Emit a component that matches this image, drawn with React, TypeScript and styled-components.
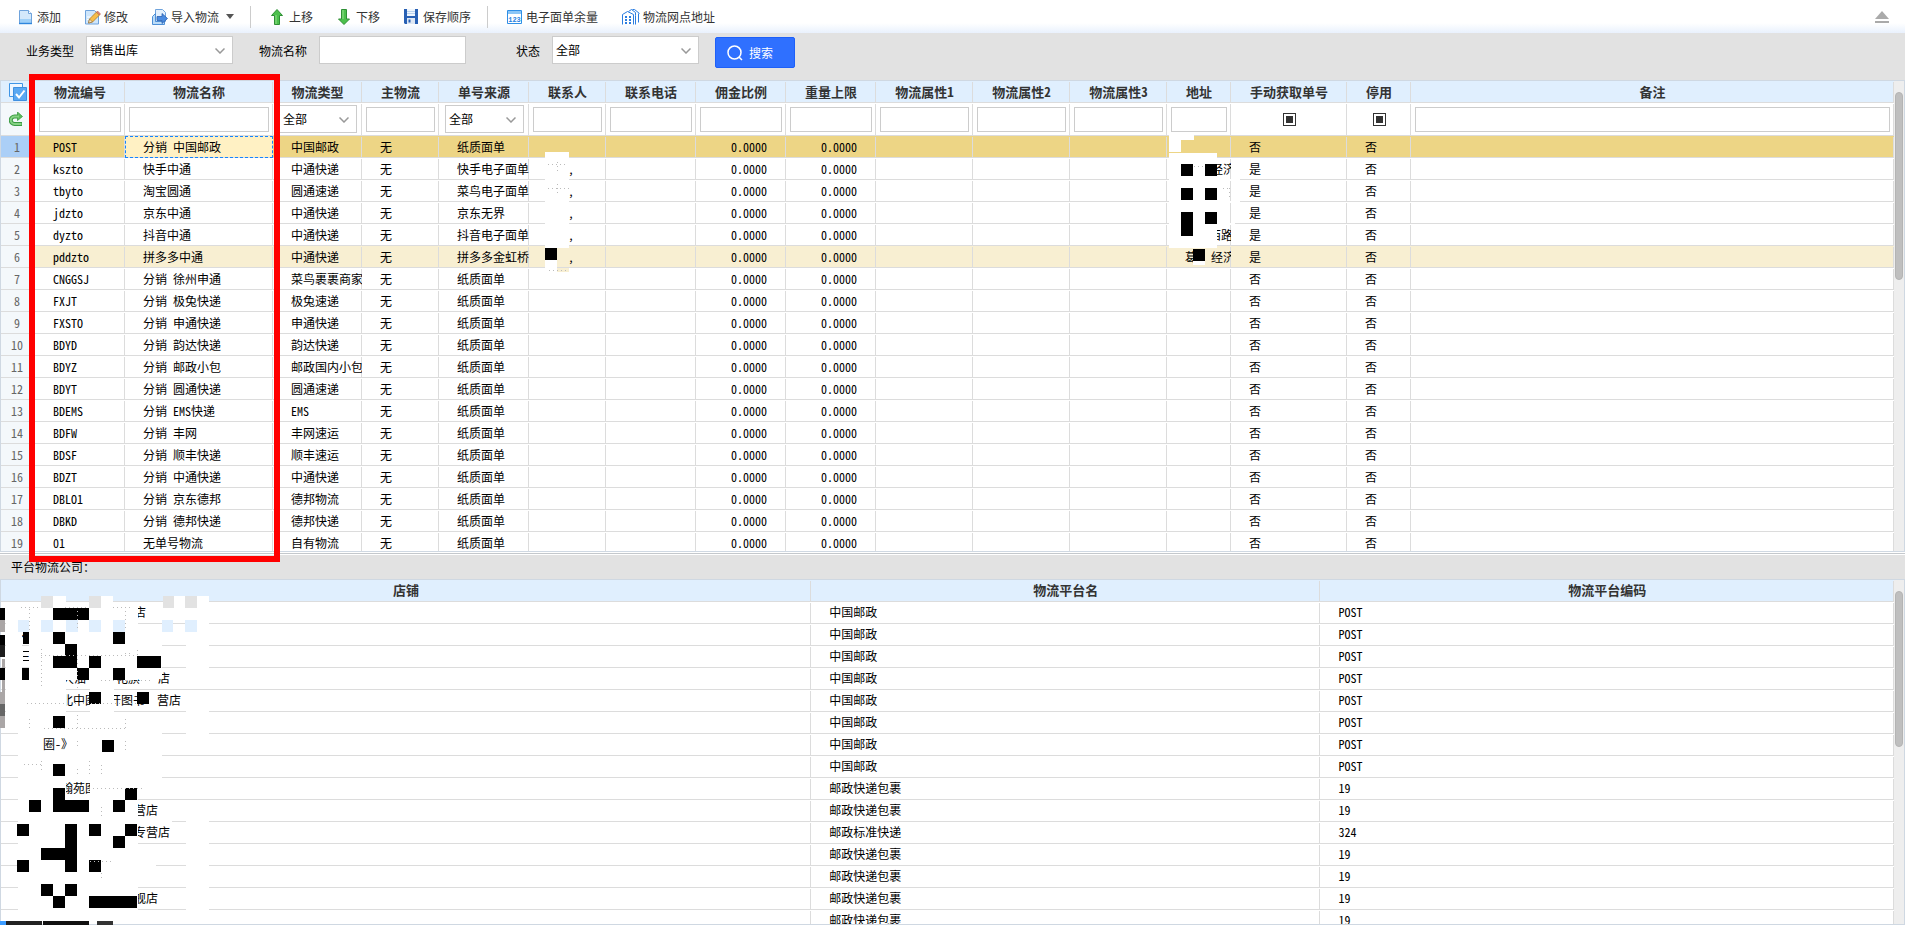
import React from "react";
import styled, { createGlobalStyle, css } from "styled-components";

const LINE = "#dcdcdc";
const FRAME = "#cfd8e2";
const HEAD = "#e0effe";

const GlobalStyle = createGlobalStyle`
  *, *::before, *::after { box-sizing: border-box; }
  html, body { margin: 0; height: 100%; }
  body, button, input, select {
    font-family: "Noto Sans Mono CJK SC", "Noto Sans CJK SC", "Liberation Mono", sans-serif;
    font-size: 12px;
    color: #000;
  }
`;

const Page = styled.main`
  display: flex;
  flex-direction: column;
  height: 100vh;
  overflow: hidden;
  background: #fff;
`;

/* ---------- toolbar ---------- */

const Toolbar = styled.header`
  display: flex;
  align-items: center;
  flex: none;
  height: 33px;
  padding: 0 12px 0 6px;
  background: linear-gradient(#fff 70%, #e9f1fd);
`;

const ToolButton = styled.button`
  display: flex;
  align-items: center;
  gap: 3px;
  height: 26px;
  padding: 0 12px;
  border: 0;
  background: none;
  color: #333;
  line-height: 18px;
  white-space: nowrap;
  svg { flex: none; }
`;

const Caret = styled.span`
  margin-left: 4px;
  border: 4px solid transparent;
  border-top: 5px solid #555;
  border-bottom: 0;
`;

const Separator = styled.span`
  width: 1px;
  height: 22px;
  margin: 0 7px 0 4px;
  background: #ccc;
`;

const CollapseButton = styled.button`
  display: flex;
  margin-left: auto;
  padding: 0 4px;
  border: 0;
  background: none;
`;

/* ---------- search bar ---------- */

const SearchBar = styled.form`
  display: flex;
  align-items: flex-start;
  flex: none;
  gap: 26px;
  height: 47px;
  padding: 3px 26px;
  background: #e2e2e2;
`;

const Field = styled.label`
  display: flex;
  align-items: center;
  gap: 12px;
  height: 28px;
`;

const FieldName = styled.span`
  width: 48px;
  text-align: right;
  white-space: nowrap;
`;

const SelectBox = styled.span<{ $wide?: boolean }>`
  position: relative;
  display: block;
  width: ${(p) => (p.$wide ? "147px" : "auto")};
  height: 28px;
  margin: ${(p) => (p.$wide ? "0" : "0 5px 0 6px")};
  svg {
    position: absolute;
    right: 8px;
    top: 12px;
    pointer-events: none;
  }
`;

const Select = styled.select`
  display: block;
  appearance: none;
  width: 100%;
  height: 100%;
  padding: 0 20px 2px 3px;
  border: 1px solid #ccc;
  border-radius: 0;
  background: #fff;
`;

const TextInput = styled.input<{ $wide?: boolean }>`
  display: block;
  width: ${(p) => (p.$wide ? "147px" : "100%")};
  height: ${(p) => (p.$wide ? "28px" : "25px")};
  padding: 0 4px;
  border: 1px solid #ccc;
  border-radius: 0;
  background: #fff;
`;

const SearchButton = styled.button`
  display: flex;
  align-items: center;
  gap: 6px;
  height: 31px;
  margin: 1px 0 0 -10px;
  padding: 0 21px 0 11px;
  border: 1px solid #1e60f8;
  border-radius: 2px;
  background: #2f70ff;
  color: #fff;
`;

/* ---------- grids ---------- */

const Pane = styled.section<{ $share: number }>`
  position: relative;
  display: flex;
  flex: ${(p) => p.$share} 1 0;
  min-height: 0;
  border: 1px solid ${FRAME};
`;

const TableArea = styled.div`
  flex: 1;
  min-width: 0;
  overflow: hidden;
`;

const Track = styled.div`
  flex: none;
  width: 10px;
  padding: 11px 1px 0;
  background: #eee;
`;

const Thumb = styled.div<{ $length: number }>`
  height: ${(p) => p.$length}%;
  border: 1px solid #b4b4b4;
  border-radius: 4px;
  background: #bfbfbf;
`;

const Table = styled.table`
  width: 100%;
  table-layout: fixed;
  border-collapse: separate;
  border-spacing: 0;
`;

const cell = css`
  height: 22px;
  padding: 0;
  border-bottom: 1px solid ${LINE};
  background-image: linear-gradient(${LINE}, ${LINE});
  background-repeat: no-repeat;
  background-size: 1px 100%;
  background-position: right 1px;
  line-height: 20px;
  white-space: nowrap;
  overflow: hidden;
`;

const HeadCell = styled.th`
  ${cell}
  background-color: ${HEAD};
  color: #333;
  font-size: 13px;
  font-weight: bold;
  text-align: center;
`;

const FilterCell = styled.td<{ $box?: boolean }>`
  ${cell}
  height: 33px;
  padding: ${(p) => (p.$box ? "0 4px 0 4px" : "0")};
`;

const tones = { plain: "#fff", active: "#edd585", marked: "#f8efd2" };
type Tone = keyof typeof tones;

const Row = styled.tr<{ $tone: Tone }>`
  background-color: ${(p) => tones[p.$tone]};
`;

const Cell = styled.td<{ $numeric?: boolean; $picked?: boolean }>`
  ${cell}
  padding: 0 18px;
  padding-right: ${(p) => (p.$numeric ? "19px" : "1px")};
  text-align: ${(p) => (p.$numeric ? "right" : "left")};
  text-overflow: clip;
  ${(p) =>
    p.$picked &&
    css`
      background: #fff1c4;
      outline: 1px dashed #1485ff;
      outline-offset: -1px;
    `}
`;

const NumberCell = styled.th<{ $active?: boolean; $tall?: boolean }>`
  ${cell}
  height: ${(p) => (p.$tall ? "33px" : "22px")};
  padding-right: 2px;
  background: ${(p) => (p.$active ? "#abcff7" : "#f4f8fb")};
  color: #666;
  font-weight: normal;
  text-align: center;
  svg { display: block; margin: 0 auto 0 8px; }
`;

const IconHead = styled(HeadCell)`
  svg { display: block; margin-left: 8px; }
`;

const TriState = styled.input`
  appearance: none;
  display: block;
  width: 13px;
  height: 13px;
  margin: 0 auto;
  padding: 2px;
  border: 1px solid #333;
  background: #333 content-box;
`;

const Piece = styled.span<{ $gap: number }>`
  padding-left: ${(p) => p.$gap}px;
`;

const Splitter = styled.div`
  flex: none;
  height: 3px;
  border: solid #fff;
  border-width: 1px 0;
  background: #c4c8cc;
`;

const PanelTitle = styled.h2`
  flex: none;
  height: 24px;
  margin: 0;
  padding: 0 11px;
  background: #e2e2e2;
  font-size: 12px;
  font-weight: normal;
  line-height: 24px;
`;

const Highlight = styled.div`
  position: absolute;
  z-index: 2;
  left: 28px;
  top: -7px;
  bottom: -11px;
  width: 251px;
  border: 6px solid #f00;
  pointer-events: none;
`;

const Cover = styled.svg`
  position: absolute;
  z-index: 1;
  left: -1px;
  top: -1px;
  pointer-events: none;
`;

/* ---------- icons ---------- */

const Svg = ({ children, size = 16 }: { children: React.ReactNode; size?: number }) => (
  <svg width={size} height={size} viewBox={`0 0 ${size} ${size}`} fill="none" aria-hidden="true">
    {children}
  </svg>
);

const DocIcon = () => (
  <Svg>
    <path d="M1.5 1.5h9l3 3v10h-12z" fill="#d3e8fb" stroke="#6fa3dc" />
    <path d="M2 10h11v4H2z" fill="#9fd0f8" />
    <path d="M10.5 1.5v3h3" fill="#fff" stroke="#6fa3dc" />
    <path d="M1 14.5h13" stroke="#2f86dd" strokeWidth="1.4" />
  </Svg>
);

const EditIcon = () => (
  <Svg>
    <path d="M.5 1.5h9l4 4v9.5H.5z" fill="#cfe6fb" stroke="#6fa3dc" />
    <path d="M2 8h6M2 10.500h4" stroke="#fff" />
    <path d="M3.500 14l1-4 7-7 3 3-7 7z" fill="#f6bd4a" stroke="#b27a22" strokeWidth=".8" />
    <path d="M11.500 3l1-1 3 3-1 1z" fill="#e98a74" stroke="#b25a4a" strokeWidth=".6" />
    <path d="M3.500 14l1-4 3 3z" fill="#f8e3bb" stroke="#8a6a3a" strokeWidth=".6" />
  </Svg>
);

const ImportIcon = () => (
  <Svg>
    <path d="M3.500 .5h7l3 3v9h-10z" fill="#e3f0fd" stroke="#6fa3dc" />
    <path d="M3.500 4.500l-3 3v8h12v-3h-9z" fill="#bcdcf8" stroke="#4d8fd6" />
    <path d="M5 7.500h5V4.500l5.500 5-5.500 5v-3H5z" fill="#4a8be0" stroke="#2c5fae" strokeWidth=".8" />
  </Svg>
);

const UpIcon = () => (
  <Svg>
    <path d="M7 .5l5.500 6H9.500V15.500h-5V6.500H1.500z" fill="#4cc04c" stroke="#2e8f35" />
    <path d="M6 6v9" stroke="#93e08c" />
  </Svg>
);

const DownIcon = () => (
  <Svg>
    <path d="M7 15.500L1.500 10h3V.5h5V10h3z" fill="#4cc04c" stroke="#2e8f35" />
    <path d="M6 1v9" stroke="#93e08c" />
  </Svg>
);

const SaveIcon = () => (
  <Svg>
    <path d="M0 0h14v15H1l-1-1z" fill="#2860b4" />
    <path d="M3 0h8v7H3z" fill="#eef5fd" />
    <path d="M3 2.500h8M3 4.500h8" stroke="#b9d2ee" />
    <path d="M3 9h8v6H3z" fill="#dfe8f4" />
    <path d="M4.500 10.500h2v3h-2z" fill="#2860b4" />
  </Svg>
);

const BalanceIcon = () => (
  <Svg>
    <path d="M.5 1.500h14v13H.5z" fill="#fff" stroke="#2f8fe6" />
    <path d="M1 2h13v3H1z" fill="#8cc6f6" />
    <text x="7.500" y="13" fontSize="7" fontFamily="Liberation Mono, monospace" fontWeight="bold" fill="#1f7fe0" textAnchor="middle">123</text>
  </Svg>
);

const BranchIcon = () => (
  <svg width="18" height="16" viewBox="0 0 18 16" fill="none" aria-hidden="true">
    <path d="M.5 15.500V5.500L5.500 2.500l6 3v10M6.500 2.500L9.500 .5l4 3v3M13.500 6.500v9M10.500 .5h2l5 4M16.500 4.500v9" stroke="#2b7de0" />
    <path d="M3 7h2v2H3zM7 7h2v2H7zM3 10h2v2H3zM7 10h2v2H7zM3 13h2v2H3zM7 13h2v2H7z" fill="#2b7de0" />
  </svg>
);

const ChevronIcon = () => (
  <svg width="10" height="6" viewBox="0 0 10 6" fill="none" aria-hidden="true">
    <path d="M.5 .5L5 5 9.500 .5" stroke="#999" strokeWidth="1.500" />
  </svg>
);

const SearchIcon = () => (
  <Svg>
    <circle cx="7.500" cy="7.500" r="6.500" stroke="#fff" strokeWidth="1.500" />
    <path d="M12 12l3 3" stroke="#fff" strokeWidth="1.500" />
  </Svg>
);

const CollapseIcon = () => (
  <svg width="14" height="12" viewBox="0 0 14 12" aria-hidden="true">
    <path d="M7 0l7 8H0zM0 10h14v2H0z" fill="#aaa" />
  </svg>
);

const SelectAllIcon = () => (
  <Svg size={18}>
    <path d="M.5 .5h13v13H.5z" fill="#eef6ff" stroke="#3f95e6" />
    <path d="M4.500 4.500h13v13h-13z" fill="#5aa8f2" stroke="#3f8fe0" />
    <path d="M7 11l3 3.500 5.500-7" stroke="#fff" strokeWidth="2" />
  </Svg>
);

const ResetIcon = () => (
  <Svg size={14}>
    <path d="M13 12H5.500a3.500 3.500 0 0 1 0-7.500H9" stroke="#3c9b45" strokeWidth="4" />
    <path d="M8.500 0l5 4.500-5 4z" fill="#5cbb5c" stroke="#3c9b45" strokeWidth=".8" />
    <path d="M12.500 12H5.500a3.500 3.500 0 0 1 0-7.500H10" stroke="#85d383" strokeWidth="2" />
  </Svg>
);

/* ---------- data ---------- */

type Carrier = [code: string, name: string, type: string, source: string, manual?: boolean];

const carriers: Carrier[] = [
  ["POST", "分销 中国邮政", "中国邮政", "纸质面单"],
  ["kszto", "快手中通", "中通快递", "快手电子面单", true],
  ["tbyto", "淘宝圆通", "圆通速递", "菜鸟电子面单", true],
  ["jdzto", "京东中通", "中通快递", "京东无界", true],
  ["dyzto", "抖音中通", "中通快递", "抖音电子面单", true],
  ["pddzto", "拼多多中通", "中通快递", "拼多多金虹桥", true],
  ["CNGGSJ", "分销 徐州申通", "菜鸟裹裹商家", "纸质面单"],
  ["FXJT", "分销 极兔快递", "极兔速递", "纸质面单"],
  ["FXSTO", "分销 申通快递", "申通快递", "纸质面单"],
  ["BDYD", "分销 韵达快递", "韵达快递", "纸质面单"],
  ["BDYZ", "分销 邮政小包", "邮政国内小包", "纸质面单"],
  ["BDYT", "分销 圆通快递", "圆通速递", "纸质面单"],
  ["BDEMS", "分销 EMS快递", "EMS", "纸质面单"],
  ["BDFW", "分销 丰网", "丰网速运", "纸质面单"],
  ["BDSF", "分销 顺丰快递", "顺丰速运", "纸质面单"],
  ["BDZT", "分销 中通快递", "中通快递", "纸质面单"],
  ["DBLO1", "分销 京东德邦", "德邦物流", "纸质面单"],
  ["DBKD", "分销 德邦快递", "德邦快递", "纸质面单"],
  ["01", "无单号物流", "自有物流", "纸质面单"],
];

type Part = [gap: number, text: string];

const addresses: Record<number, Part[]> = {
  1: [[26, "经济"]],
  4: [[24, "西路"]],
  5: [[0, "葛"], [14, "经济"]],
};

type FilterKind = "text" | "select" | "check";
const columns: { title: string; width?: number; filter: FilterKind }[] = [
  { title: "物流编号", width: 90, filter: "text" },
  { title: "物流名称", width: 148, filter: "text" },
  { title: "物流类型", width: 89, filter: "select" },
  { title: "主物流", width: 77, filter: "text" },
  { title: "单号来源", width: 90, filter: "select" },
  { title: "联系人", width: 77, filter: "text" },
  { title: "联系电话", width: 90, filter: "text" },
  { title: "佣金比例", width: 90, filter: "text" },
  { title: "重量上限", width: 90, filter: "text" },
  { title: "物流属性1", width: 97, filter: "text" },
  { title: "物流属性2", width: 97, filter: "text" },
  { title: "物流属性3", width: 97, filter: "text" },
  { title: "地址", width: 64, filter: "text" },
  { title: "手动获取单号", width: 116, filter: "check" },
  { title: "停用", width: 64, filter: "check" },
  { title: "备注", filter: "text" },
];

const stores: { parts: Part[]; platform: string; code: string }[] = [
  { parts: [[115, "店"]], platform: "中国邮政", code: "POST" },
  { parts: [[0, "才"]], platform: "中国邮政", code: "POST" },
  { parts: [[0, "三"]], platform: "中国邮政", code: "POST" },
  { parts: [[0, "キ"], [31, "大油"], [30, "化旗"], [18, "店"]], platform: "中国邮政", code: "POST" },
  { parts: [[42, "北中图"], [12, "开图书"], [12, "营店"]], platform: "中国邮政", code: "POST" },
  { parts: [], platform: "中国邮政", code: "POST" },
  { parts: [[24, "圈-》"]], platform: "中国邮政", code: "POST" },
  { parts: [], platform: "中国邮政", code: "POST" },
  { parts: [[42, "翰苑图"]], platform: "邮政快递包裹", code: "19" },
  { parts: [[115, "营店"]], platform: "邮政快递包裹", code: "19" },
  { parts: [[115, "专营店"]], platform: "邮政标准快递", code: "324" },
  { parts: [], platform: "邮政快递包裹", code: "19" },
  { parts: [], platform: "邮政快递包裹", code: "19" },
  { parts: [[115, "舰店"]], platform: "邮政快递包裹", code: "19" },
  { parts: [], platform: "邮政快递包裹", code: "19" },
];

/* Blocks of the privacy mosaic: x, y, width, height, colour */
type Block = [number, number, number, number, string?];
const W = "#fff";
const G = "#e2e2e2";
const B = "#e0effe";

const carrierBlocks: Block[] = [
  [545, 72, 24, 96, W], [545, 180, 12, 8, W], [557, 188, 12, 4, "#f8efd2"], [545, 168, 12, 12],
  [1169, 55, 12, 17, W], [1181, 55, 13, 5, W], [1169, 73, 48, 95, W],
  [1217, 99, 23, 2, W], [1217, 121, 23, 2, W], [1217, 143, 18, 2, W],
  [1181, 84, 12, 12], [1205, 84, 12, 12], [1181, 108, 12, 12], [1205, 108, 12, 12],
  [1181, 132, 12, 24], [1205, 132, 12, 12], [1193, 169, 12, 12], [1193, 181, 12, 4, W],
];

const storeBlocks: Block[] = [
  // erased background
  [6, 23, 132, 20, W], [6, 43, 16, 90, W], [29, 43, 109, 58, W], [22, 67, 1, 20, W], [138, 66, 24, 34, W],
  [18, 101, 48, 32, W], [90, 101, 24, 32, W], [18, 133, 144, 20, W], [18, 153, 24, 46, W],
  [67, 153, 95, 46, W], [42, 174, 120, 25, W], [42, 152, 96, 4, W], [18, 199, 48, 144, W],
  [90, 199, 72, 21, W], [66, 220, 72, 123, W], [138, 241, 34, 3, W], [138, 285, 18, 3, W],
  [186, 17, 23, 93, W], [186, 131, 23, 3, W], [186, 153, 23, 3, W], [186, 241, 23, 3, W],
  [186, 263, 23, 3, W], [186, 285, 23, 3, W], [186, 307, 23, 3, W], [186, 329, 23, 3, W],
  // tinted squares over the header edge and the second row
  [41, 17, 12, 12, G], [53, 17, 13, 12, W], [89, 17, 12, 12, G], [101, 17, 12, 12, W],
  [163, 17, 11, 12, G], [174, 17, 11, 12, W], [185, 17, 12, 12, G], [197, 17, 12, 12, W],
  [18, 41, 11, 12, B], [41, 41, 12, 12, B], [66, 41, 12, 12, B], [89, 41, 12, 12, B],
  [113, 41, 12, 12, B], [162, 41, 11, 12, B], [185, 41, 12, 12, B],
  // left edge
  [0, 29, 5, 12], [0, 41, 5, 12, "#aaa6a6"], [0, 56, 5, 10], [0, 66, 5, 12, "#1c1c1c"],
  [2, 80, 3, 9, "#aaa6a6"], [0, 89, 5, 12], [2, 101, 3, 12, "#aaa6a6"], [0, 113, 5, 12, "#aaa6a6"],
  [0, 125, 5, 12, "#666"], [0, 137, 5, 12, "#aaa6a6"],
  // dark squares
  [53, 29, 36, 12], [23, 53, 6, 12], [53, 53, 12, 12], [113, 53, 12, 12], [65, 65, 12, 24],
  [53, 77, 12, 12], [89, 77, 12, 12], [137, 77, 24, 12], [22, 89, 7, 12], [77, 89, 12, 12],
  [113, 89, 12, 12], [89, 113, 12, 12], [137, 113, 12, 12], [53, 137, 12, 12],
  [102, 161, 12, 12], [53, 185, 12, 12], [53, 209, 12, 24], [65, 221, 24, 12], [29, 221, 12, 12],
  [125, 209, 12, 12], [113, 221, 12, 12], [17, 245, 12, 12], [65, 245, 12, 48], [89, 245, 12, 12],
  [125, 245, 12, 12], [113, 257, 12, 12], [41, 269, 24, 12], [17, 281, 12, 12], [89, 281, 12, 12],
  [41, 305, 12, 12], [65, 305, 12, 12], [53, 317, 12, 12], [89, 317, 48, 12],
  [0, 342, 6, 4, "#3b9bff"], [6, 342, 36, 4, "#222"], [43, 342, 46, 4, "#111"], [97, 342, 16, 4, "#333"],
];

const carrierTraces = "M548 84.500h20M547.500 108.500h22M557.500 82v12M557.500 104v10M549 190.500h18M1193.500 86h12M1223 108.500h8M1229.500 108v12";
const storeTraces =
  "M21 28.500h20M65 28.500h24M113 28.500h20M29.500 30v22M77.500 32v20M125.500 32v18M41 76.500h96M125 74.500h8M137.500 71v7M41.500 70v40M77.500 80v30M101 101.500h52M27 124.500h110M29.500 140v10M77.500 136v14M125.500 140v10M44 149.500h84M77.500 162v8M125.500 162v10M24 185.500h18M41.500 182v12M77.500 190v6M89.500 182v16M101.500 186v10M93 209.500h52M101.500 228v10M90 282.500h24M101.500 294v8";

/* ---------- views ---------- */

const Mosaic = ({ blocks, traces, width, height }: { blocks: Block[]; traces: string; width: number; height: number }) => (
  <Cover width={width} height={height} shapeRendering="crispEdges" aria-hidden="true">
    {blocks.map(([x, y, w, h, fill = "#000"], i) => (
      <rect key={i} x={x} y={y} width={w} height={h} fill={fill} />
    ))}
    <path d={traces} stroke="#bbb" strokeDasharray="1 3" fill="none" />
  </Cover>
);

const Dropdown = ({ options, label, wide }: { options: string[]; label: string; wide?: boolean }) => (
  <SelectBox $wide={wide}>
    <Select aria-label={label}>
      {options.map((o) => (
        <option key={o}>{o}</option>
      ))}
    </Select>
    <ChevronIcon />
  </SelectBox>
);

const Parts = ({ parts }: { parts: Part[] }) => (
  <>
    {parts.map(([gap, text], i) => (
      <Piece key={i} $gap={gap}>{text}</Piece>
    ))}
  </>
);

const setMixed = (el: HTMLInputElement | null) => {
  if (el) el.indeterminate = true;
};

const CarrierTable = () => (
  <Table>
    <colgroup>
      <col style={{ width: 34 }} />
      {columns.map((c) => (
        <col key={c.title} style={c.width ? { width: c.width } : undefined} />
      ))}
    </colgroup>
    <thead>
      <tr>
        <IconHead aria-label="全选"><SelectAllIcon /></IconHead>
        {columns.map((c) => (
          <HeadCell key={c.title} scope="col">{c.title}</HeadCell>
        ))}
      </tr>
      <tr>
        <NumberCell $tall aria-label="重置"><ResetIcon /></NumberCell>
        {columns.map((c) => (
          <FilterCell key={c.title} $box={c.filter === "text"}>
            {c.filter === "text" && <TextInput aria-label={c.title} />}
            {c.filter === "select" && <Dropdown label={c.title} options={["全部"]} />}
            {c.filter === "check" && <TriState type="checkbox" aria-label={c.title} ref={setMixed} />}
          </FilterCell>
        ))}
      </tr>
    </thead>
    <tbody>
      {carriers.map(([code, name, type, source, manual], i) => (
        <Row key={code} $tone={i === 0 ? "active" : i === 5 ? "marked" : "plain"}>
          <NumberCell scope="row" $active={i === 0}>{i + 1}</NumberCell>
          <Cell>{code}</Cell>
          <Cell $picked={i === 0}>{name}</Cell>
          <Cell>{type}</Cell>
          <Cell>无</Cell>
          <Cell>{source}</Cell>
          <Cell>{i > 0 && i < 6 && <Piece $gap={21}>,</Piece>}</Cell>
          <Cell />
          <Cell $numeric>0.0000</Cell>
          <Cell $numeric>0.0000</Cell>
          <Cell />
          <Cell />
          <Cell />
          <Cell><Parts parts={addresses[i] ?? []} /></Cell>
          <Cell>{manual ? "是" : "否"}</Cell>
          <Cell>否</Cell>
          <Cell />
        </Row>
      ))}
    </tbody>
  </Table>
);

const StoreTable = () => (
  <Table>
    <colgroup>
      <col style={{ width: "42.8%" }} />
      <col style={{ width: "26.9%" }} />
      <col />
    </colgroup>
    <thead>
      <tr>
        <HeadCell scope="col">店铺</HeadCell>
        <HeadCell scope="col">物流平台名</HeadCell>
        <HeadCell scope="col">物流平台编码</HeadCell>
      </tr>
    </thead>
    <tbody>
      {stores.map((s, i) => (
        <Row key={i} $tone="plain">
          <Cell><Parts parts={s.parts} /></Cell>
          <Cell>{s.platform}</Cell>
          <Cell>{s.code}</Cell>
        </Row>
      ))}
    </tbody>
  </Table>
);

export default function App() {
  return (
    <Page>
      <GlobalStyle />
      <Toolbar>
        <ToolButton><DocIcon />添加</ToolButton>
        <ToolButton><EditIcon />修改</ToolButton>
        <ToolButton><ImportIcon />导入物流<Caret /></ToolButton>
        <Separator />
        <ToolButton><UpIcon />上移</ToolButton>
        <ToolButton><DownIcon />下移</ToolButton>
        <ToolButton><SaveIcon />保存顺序</ToolButton>
        <Separator />
        <ToolButton><BalanceIcon />电子面单余量</ToolButton>
        <ToolButton><BranchIcon />物流网点地址</ToolButton>
        <CollapseButton aria-label="收起"><CollapseIcon /></CollapseButton>
      </Toolbar>

      <SearchBar onSubmit={(e) => e.preventDefault()}>
        <Field>
          <FieldName>业务类型</FieldName>
          <Dropdown wide label="业务类型" options={["销售出库"]} />
        </Field>
        <Field>
          <FieldName>物流名称</FieldName>
          <TextInput $wide />
        </Field>
        <Field>
          <FieldName>状态</FieldName>
          <Dropdown wide label="状态" options={["全部"]} />
        </Field>
        <SearchButton type="submit"><SearchIcon />搜索</SearchButton>
      </SearchBar>

      <Pane $share={472}>
        <TableArea><CarrierTable /></TableArea>
        <Track><Thumb $length={41} /></Track>
        <Mosaic blocks={carrierBlocks} traces={carrierTraces} width={1250} height={300} />
        <Highlight />
      </Pane>
      <Splitter />
      <PanelTitle>平台物流公司：</PanelTitle>
      <Pane $share={346}>
        <TableArea><StoreTable /></TableArea>
        <Track><Thumb $length={47} /></Track>
        <Mosaic blocks={storeBlocks} traces={storeTraces} width={210} height={346} />
      </Pane>
    </Page>
  );
}
